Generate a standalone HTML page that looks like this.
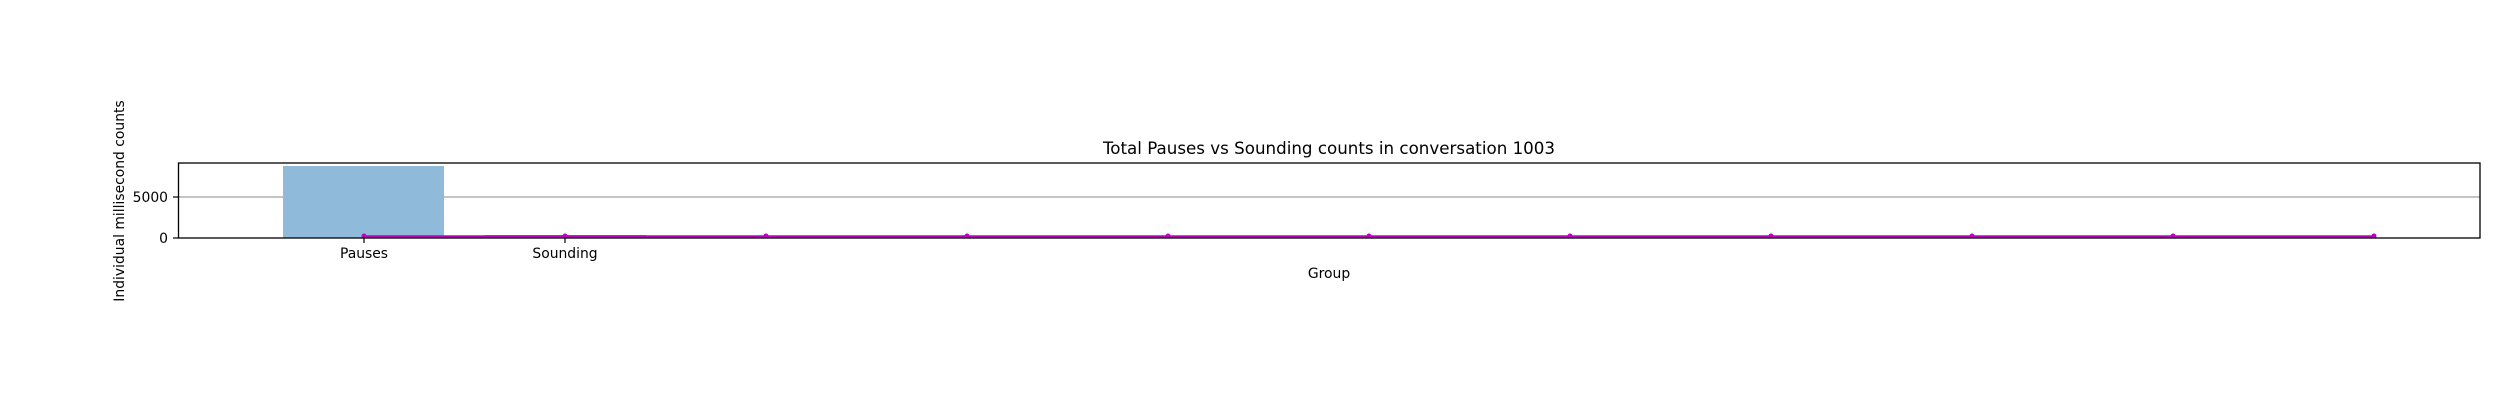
<!DOCTYPE html>
<html><head><meta charset="utf-8"><style>html,body{margin:0;padding:0;background:#fff}svg{display:block}</style></head>
<body>
<svg width="2500" height="400" xmlns="http://www.w3.org/2000/svg" font-family="DejaVu Sans, sans-serif">
<rect width="2500" height="400" fill="#fff"/>
<line x1="178.5" y1="197" x2="2480" y2="197" stroke="#b0b0b0" stroke-width="1.5"/>
<rect x="283" y="166" width="161" height="72" fill="#8fbad9"/>
<rect x="485" y="235" width="161" height="3" fill="#8f8fd9"/>
<line x1="364" y1="236.5" x2="2374" y2="236.5" stroke="#c000c0" stroke-width="2.5"/>
<g fill="#c000c0">
<circle cx="364" cy="236" r="2.5"/><circle cx="565" cy="236" r="2.5"/><circle cx="766" cy="236" r="2.5"/><circle cx="967" cy="236" r="2.5"/><circle cx="1168" cy="236" r="2.5"/><circle cx="1369" cy="236" r="2.5"/><circle cx="1570" cy="236" r="2.5"/><circle cx="1771" cy="236" r="2.5"/><circle cx="1972" cy="236" r="2.5"/><circle cx="2173" cy="236" r="2.5"/><circle cx="2374" cy="236" r="2.5"/>
</g>
<rect x="178.5" y="163" width="2301.5" height="75" fill="none" stroke="#000" stroke-width="1.3"/>
<g stroke="#000" stroke-width="1.2">
<line x1="364" y1="238" x2="364" y2="243"/><line x1="565" y1="238" x2="565" y2="243"/>
<line x1="173" y1="197" x2="178.5" y2="197"/><line x1="173" y1="238" x2="178.5" y2="238"/>
</g>
<g font-size="13.9" fill="#000">
<text x="168" y="202" text-anchor="end">5000</text>
<text x="168" y="243" text-anchor="end">0</text>
<text x="364" y="258" text-anchor="middle">Pauses</text>
<text x="565" y="258" text-anchor="middle">Sounding</text>
<text x="1329" y="278" text-anchor="middle">Group</text>
<text transform="translate(124,201) rotate(-90)" text-anchor="middle">Individual millisecond counts</text>
</g>
<text x="1329" y="154" font-size="16.7" text-anchor="middle">Total Pauses vs Sounding counts in conversation 1003</text>
</svg>
</body></html>
